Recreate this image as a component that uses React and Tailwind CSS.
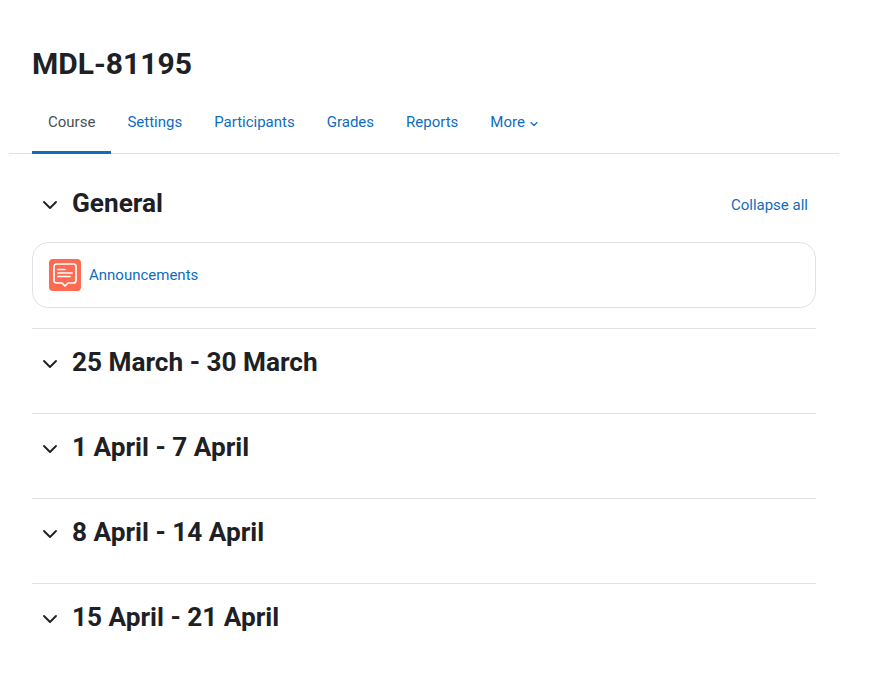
import { ChevronDown } from "lucide-react";

const tabs = ["Settings", "Participants", "Grades", "Reports"];
const sections = ["25 March - 30 March", "1 April - 7 April", "8 April - 14 April", "15 April - 21 April"];

function SectionTitle({ title }) {
  return (
    <div className="flex items-center h-[38px]">
      <div className="w-[40px] pl-[6px] pt-[4px]">
        <ChevronDown className="w-[24px] h-[24px] text-[#1d2125]" strokeWidth={1.9} />
      </div>
      <h3 className="text-[26.2px] leading-[32px] font-bold text-[#1d2125]">{title}</h3>
    </div>
  );
}

export default function App() {
  return (
    <div className="w-[871px] h-[686px] bg-white font-['Roboto',sans-serif] overflow-hidden">
      <div className="w-[830px] ml-[9px] pt-[46px]">
        <h1 className="ml-[23px] text-[30px] leading-[36px] font-bold text-[#1d2125]">MDL-81195</h1>
        <nav className="mt-[14px] flex h-[58px] border-b border-[#dee2e6] pl-[23px] text-[15px] text-[#0f6cbf]">
          <a className="h-[58px] flex items-center px-[16px] pb-[5px] text-[#495057] shadow-[inset_0_-3px_0_#0f6cbf]">Course</a>
          {tabs.map((t) => (
            <a key={t} className="h-[57px] flex items-center px-[16px] pb-[4px]">{t}</a>
          ))}
          <a className="h-[57px] flex items-center px-[16px] pb-[4px] gap-[3px]">
            More
            <ChevronDown className="w-[12px] h-[12px] mt-[2px]" strokeWidth={2.4} />
          </a>
        </nav>
      </div>
      <div className="ml-[32px] w-[784px]">
        <div className="flex items-center justify-between mt-[30px]">
          <SectionTitle title="General" />
          <a className="mr-[8px] mt-[4px] text-[15px] text-[#0f6cbf]">Collapse all</a>
        </div>
        <div className="mt-[20px] h-[66px] border border-[#dee2e6] rounded-[16px] flex items-center pl-[16px] gap-[8px]">
          <div className="w-[32px] h-[32px] rounded-[4px] bg-[#ff6b52] flex items-center justify-center">
            <svg width="32" height="32" viewBox="0 0 32 32" fill="none" stroke="white" strokeWidth="1.7" strokeLinecap="round" strokeLinejoin="round">
              <path d="M7.5 5h17a2.5 2.5 0 0 1 2.5 2.5v14a2.5 2.5 0 0 1-2.5 2.5h-5.5l-3 3-3-3H7.5A2.5 2.5 0 0 1 5 21.5v-14A2.5 2.5 0 0 1 7.5 5z" />
              <path d="M9 10.5h7M9 14h14M9 17.5h12" />
            </svg>
          </div>
          <a className="text-[15px] text-[#0f6cbf]">Announcements</a>
        </div>
        {sections.map((s, i) => (
          <div key={s} className={`border-t border-[#dee2e6] h-[85px] pt-[14px] ${i === 0 ? "mt-[20px]" : ""}`}>
            <SectionTitle title={s} />
          </div>
        ))}
      </div>
    </div>
  );
}
